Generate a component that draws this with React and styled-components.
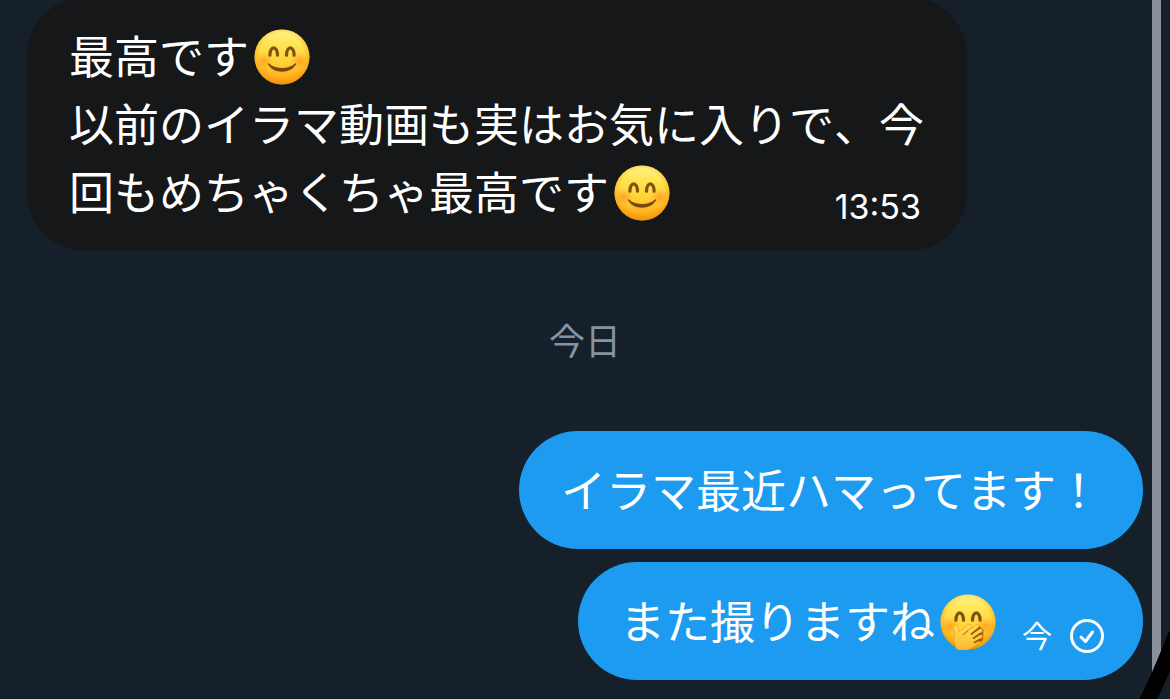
import React from 'react';
import styled, { createGlobalStyle } from 'styled-components';

function EmojiFace({ id }) {
    return (
        <>
            <defs>
                <linearGradient id={`${id}Face`} x1="0" y1="0" x2="0" y2="1">
                    <stop offset="0" stopColor="#FFF48A" />
                    <stop offset="0.25" stopColor="#FFE656" />
                    <stop offset="0.6" stopColor="#FFD135" />
                    <stop offset="0.85" stopColor="#FFB322" />
                    <stop offset="1" stopColor="#F59B14" />
                </linearGradient>
                <radialGradient id={`${id}Rim`} cx="0.5" cy="0.46" r="0.54">
                    <stop offset="0.72" stopColor="#FF9D0A" stopOpacity="0" />
                    <stop offset="1" stopColor="#F08A00" stopOpacity="0.6" />
                </radialGradient>
                <radialGradient id={`${id}Cheek`}>
                    <stop offset="0" stopColor="#FF7A1A" stopOpacity="0.55" />
                    <stop offset="1" stopColor="#FF8A1A" stopOpacity="0" />
                </radialGradient>
            </defs>
            <circle cx="28" cy="28" r="27.5" fill={`url(#${id}Face)`} />
            <circle cx="28" cy="28" r="27.5" fill={`url(#${id}Rim)`} />
            <ellipse cx="10" cy="32" rx="9.5" ry="8.5" fill={`url(#${id}Cheek)`} />
            <ellipse cx="46" cy="32" rx="9.5" ry="8.5" fill={`url(#${id}Cheek)`} />
            <path d="M15.9 26.2C15.9 16.5 23.5 16.5 23.5 26.2" stroke="#7A5310" strokeWidth="3.2" strokeLinecap="round" fill="none" />
            <path d="M32.5 26.2C32.5 16.5 40.1 16.5 40.1 26.2" stroke="#7A5310" strokeWidth="3.2" strokeLinecap="round" fill="none" />
        </>
    );
}

function SmileEmoji({ id }) {
    return (
        <Emoji viewBox="0 0 56 56" role="img" aria-label="にっこり">
            <EmojiFace id={id} />
            <path d="M14.5 35C20 44.5 36 44.5 41.5 35C35 41.2 21 41.2 14.5 35Z" stroke="#7A4A08" strokeWidth="1.4" strokeLinejoin="round" fill="#7A4A08" />
        </Emoji>
    );
}

function GiggleEmoji() {
    return (
        <Emoji viewBox="0 0 56 56" role="img" aria-label="くすくす">
            <EmojiFace id="giggle" />
            <defs>
                <linearGradient id="giggleHand" x1="0" y1="0" x2="0" y2="1">
                    <stop offset="0" stopColor="#FFDD55" />
                    <stop offset="0.6" stopColor="#FFC93C" />
                    <stop offset="1" stopColor="#FFB22A" />
                </linearGradient>
            </defs>
            <path d="M27 39L39 31.5L43.5 36L43 46L36 52L26 50Z" fill="#A8660E" />
            <path
                d="M15 52C13.5 47 14.5 43 14.8 39.5C13 35 13.5 31 15.5 31C17.5 31 18.5 35 19.5 37.5L28 30.8C31 29 32.3 31.8 30.5 33.8L27.5 37L36 31C38.6 29.6 40 31.8 38 33.8L31.5 39.8L39.5 35.3C42.2 34.2 43.4 36.6 41 38.6L33.5 44L40.2 41C42.7 40.4 43.2 42.8 41 44.4L34.5 48.4L38.5 47.2C40.5 47 40.6 48.6 39 49.6C33 53.5 28 57 22 56.5C18 56.5 16 55 15 52Z"
                fill="url(#giggleHand)"
                stroke="#E09A1C"
                strokeWidth="0.6"
            />
            <path d="M27.5 37L23 40.6" stroke="#C27A14" strokeWidth="1.2" strokeLinecap="round" />
            <path d="M31.5 40L38.5 34.6M33.5 44.2L40.5 39.4M34.5 48.6L40 45.4" stroke="#9A5B0A" strokeWidth="1.7" strokeLinecap="round" />
        </Emoji>
    );
}

function SentIcon() {
    return (
        <CheckIcon viewBox="0 0 36 36" role="img" aria-label="送信済み">
            <circle cx="18" cy="18" r="15.5" />
            <path d="M12 19L16.5 23.5L23.5 14" />
        </CheckIcon>
    );
}

function App() {
    return (
        <>
            <GlobalStyle />
            <Page>
                <Thread>
                    <Received>
                        <Message>
                            最高です<SmileEmoji id="smileTop" /><br />
                            以前のイラマ動画も実はお気に入りで、今回もめちゃくちゃ最高です<SmileEmoji id="smileEnd" />
                            <Time>13:53</Time>
                        </Message>
                    </Received>
                    <DateLabel>今日</DateLabel>
                    <SentGroup>
                        <Sent>
                            <Message>イラマ最近ハマってます！</Message>
                        </Sent>
                        <Sent $withStatus>
                            <Message>また撮りますね<GiggleEmoji /></Message>
                            <Status>
                                <StatusText>今</StatusText>
                                <SentIcon />
                            </Status>
                        </Sent>
                    </SentGroup>
                </Thread>
                <ScrollTrack>
                    <ScrollThumb />
                </ScrollTrack>
                <Scribble viewBox="0 0 40 70" aria-hidden="true">
                    <path d="M13 80C23 62 32 42 46 6" />
                </Scribble>
            </Page>
        </>
    );
}

const GlobalStyle = createGlobalStyle`
    * {
        box-sizing: border-box;
    }
    body {
        margin: 0;
        background-color: #15202a;
        font-family: "Noto Sans CJK JP", sans-serif;
    }
`;

const Page = styled.main`
    position: relative;
    display: flex;
    height: 100vh;
    overflow: hidden;
    color: #fff;
`;

const Thread = styled.section`
    flex: 1;
    min-width: 0;
    display: flex;
    flex-direction: column;
    justify-content: flex-end;
    padding: 0 9px 19px 27px;
`;

const Bubble = styled.article`
    max-width: min(100%, 940px);
    padding: 24px 42px 26px;
    border-radius: 59px;
`;

const Received = styled(Bubble)`
    align-self: flex-start;
    background-color: #151718;
`;

const Sent = styled(Bubble)`
    display: flex;
    align-items: flex-end;
    gap: 25px;
    padding-right: ${({ $withStatus }) => ($withStatus ? '38px' : '42px')};
    background-color: #1d9bf0;
`;

const SentGroup = styled.div`
    display: flex;
    flex-direction: column;
    align-items: flex-end;
    gap: 13px;
`;

const Message = styled.p`
    display: flow-root;
    margin: 0;
    font-size: 45px;
    font-kerning: none;
    line-height: 68px;
`;

const Time = styled.time`
    float: right;
    margin: 32px 4px 0 0;
    font-family: Inter, sans-serif;
    font-size: 34px;
    line-height: 36px;
`;

const Status = styled.div`
    display: flex;
    align-items: flex-start;
    gap: 17px;
`;

const StatusText = styled.time`
    font-size: 30px;
    line-height: 32px;
`;

const DateLabel = styled.h2`
    margin: 60px 0 64px;
    color: #8494a3;
    font-size: 36px;
    font-weight: 400;
    line-height: 56px;
    text-align: center;
`;

const Emoji = styled.svg`
    width: 56px;
    height: 56px;
    margin: 0 1px 0 5px;
    vertical-align: -11px;
`;

const CheckIcon = styled.svg`
    width: 36px;
    height: 36px;
    fill: none;
    stroke: #fff;
    stroke-width: 3;
    stroke-linecap: round;
    stroke-linejoin: round;
`;

const ScrollTrack = styled.div`
    display: flex;
    width: 18px;
    padding-bottom: 9px;
`;

const ScrollThumb = styled.div`
    width: 9px;
    background-color: #8a9099;
    border-radius: 0 0 5px 5px;
`;

const Scribble = styled.svg`
    position: absolute;
    right: 0;
    bottom: 0;
    width: 40px;
    height: 70px;
    fill: none;
    stroke: #000;
    stroke-width: 16;
`;

export default App;
